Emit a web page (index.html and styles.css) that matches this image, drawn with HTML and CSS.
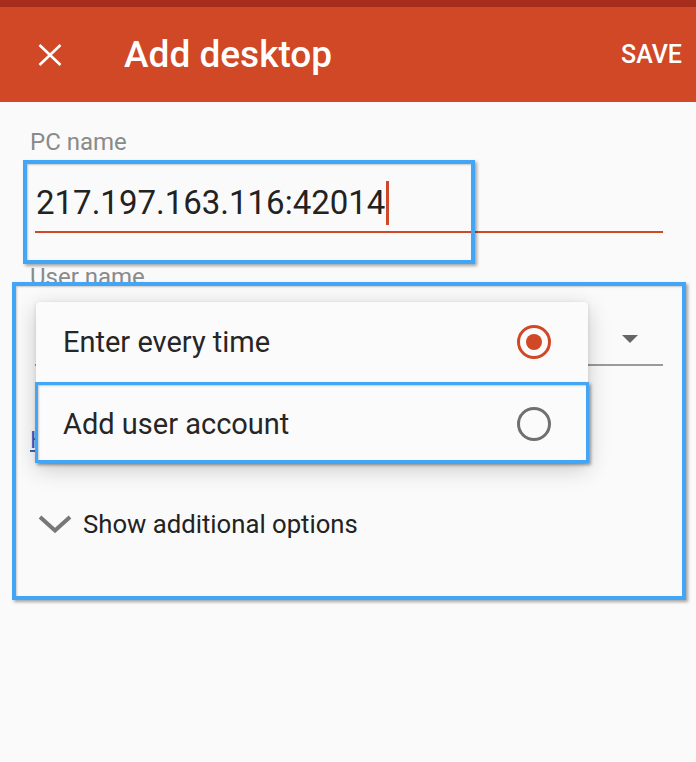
FILE: index.html
```html
<!DOCTYPE html>
<html lang="en">
<head>
<meta charset="utf-8">
<title>Add desktop</title>
<link rel="stylesheet" href="styles.css">
</head>
<body>
<div class="status"></div>
<header class="appbar">
  <span class="close">
    <svg width="24" height="22" viewBox="0 0 24 22"><path d="M1.5 1 L22.5 21 M22.5 1 L1.5 21" stroke="#fff" stroke-width="2.6" fill="none"/></svg>
  </span>
  <h1 class="title">Add desktop</h1>
  <span class="save">SAVE</span>
</header>
<main class="form">
  <div class="label">PC name</div>
  <div class="field"><span class="value">217.197.163.116:42014</span><span class="cursor"></span></div>
  <div class="label label-user">User name</div>
  <div class="select">
    <svg class="arrow" width="16" height="8" viewBox="0 0 16 8"><path d="M0 0 H16 L8 8 Z" fill="#666"/></svg>
  </div>
  <a class="link" href="#">Help</a>
  <div class="more">
    <svg class="chev" width="34" height="18" viewBox="0 0 34 18"><path d="M2 2 L17 15.5 L32 2" stroke="#777" stroke-width="4" fill="none"/></svg>
    <span>Show additional options</span>
  </div>
</main>

<div class="menu">
  <div class="item"><span>Enter every time</span><span class="radio on"></span></div>
  <div class="item"><span>Add user account</span><span class="radio"></span></div>
</div>

<div class="mark mark-pc"></div>
<div class="mark mark-user"></div>
<div class="mark mark-item"></div>
</body>
</html>
```
FILE: styles.css
```css
html, body {
  margin: 0;
  padding: 0;
  background: #fafafa;
  font-family: Roboto, "Noto Sans", sans-serif;
}
body {
  width: 696px;
  height: 762px;
  overflow: hidden;
}
.status {
  height: 7px;
  background: #a62c1b;
}
.appbar {
  height: 95px;
  background: #d04826;
  display: flex;
  align-items: center;
  color: #fff;
}
.close {
  margin-left: 38px;
  width: 24px;
  height: 22px;
  display: flex;
}
.title {
  margin: 0 0 0 62px;
  font-size: 37px;
  font-weight: 500;
  line-height: 40px;
}
.save {
  margin-left: auto;
  margin-right: 14px;
  font-size: 25px;
  font-weight: 500;
}
.form {
  padding: 0 33px 0 30px;
  display: flex;
  flex-direction: column;
  align-items: flex-start;
}
.label {
  margin-top: 26px;
  font-size: 24px;
  line-height: 28px;
  color: #8a8a8a;
}
.label-user {
  margin-top: 30px;
}
.field {
  align-self: stretch;
  margin: 25px 0 0 5px;
  padding: 0 0 6px 1px;
  border-bottom: 2.5px solid #d04826;
  display: flex;
  align-items: center;
  height: 44px;
}
.value {
  font-size: 33px;
  line-height: 44px;
  color: #222;
}
.cursor {
  width: 2.5px;
  height: 44px;
  background: #d04826;
  margin-left: 1px;
}
.select {
  align-self: stretch;
  margin-left: 5px;
  height: 75px;
  box-sizing: border-box;
  border-bottom: 2px solid #9a9a9a;
  display: flex;
  justify-content: flex-end;
  align-items: flex-end;
  padding: 0 25px 21px 0;
}
.link {
  margin-top: 60px;
  font-size: 24px;
  line-height: 28px;
  color: #3a5fcd;
}
.more {
  margin: 54px 0 0 8px;
  display: flex;
  align-items: center;
  font-size: 25.7px;
  line-height: 32px;
  color: #222;
}
.chev {
  margin-right: 11px;
}
.menu {
  position: absolute;
  left: 36px;
  top: 302px;
  width: 552px;
  background: #fbfbfb;
  border-radius: 3px;
  box-shadow: 0 6px 22px rgba(0, 0, 0, 0.2), 0 1px 4px rgba(0, 0, 0, 0.12);
}
.item {
  height: 80px;
  display: flex;
  align-items: center;
  justify-content: space-between;
  padding: 0 37px 0 27px;
  font-size: 29px;
  color: #262626;
}
.item + .item {
  padding-top: 3px;
  height: 78px;
}
.radio {
  width: 34px;
  height: 34px;
  box-sizing: border-box;
  border-radius: 50%;
  border: 3px solid #707070;
  display: flex;
  align-items: center;
  justify-content: center;
}
.radio.on {
  border-color: #d04826;
}
.radio.on::after {
  content: "";
  width: 16px;
  height: 16px;
  border-radius: 50%;
  background: #d04826;
}
.mark {
  position: absolute;
  border: 4px solid #42a5f5;
  box-sizing: border-box;
  box-shadow: 2px 2px 3px rgba(0, 0, 0, 0.35), inset 1px 1px 2px rgba(0, 0, 0, 0.2);
}
.mark-pc {
  left: 23px;
  top: 160px;
  width: 452px;
  height: 104px;
}
.mark-user {
  left: 12px;
  top: 282px;
  width: 674px;
  height: 318px;
}
.mark-item {
  left: 35px;
  top: 382px;
  width: 554px;
  height: 81px;
  border-width: 3px;
}
```
